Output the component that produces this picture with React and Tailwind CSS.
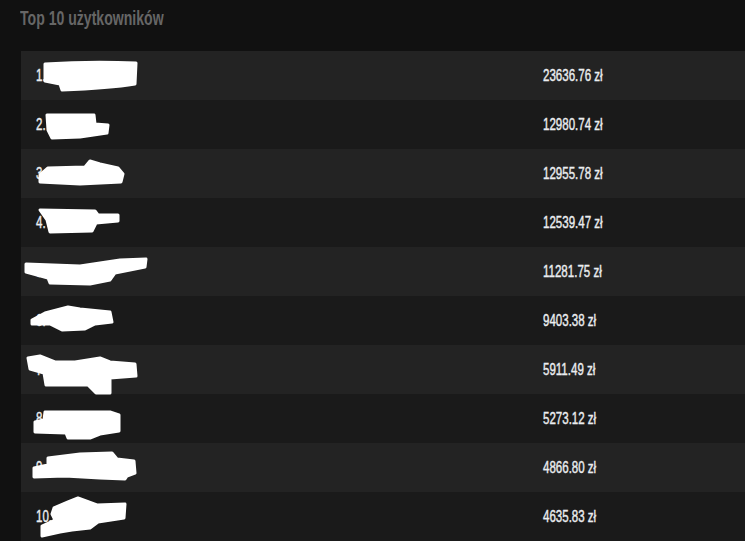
import React from "react";

const rows = [
  { rank: "1.", amount: "23636.76 zł", blob: "M45,13 Q90,10 136,12 L135,33 Q110,37 62,39 L60,33 L45,30 Z" },
  { rank: "2.", amount: "12980.74 zł", blob: "M47,15 L94,15 L95,24 L108,25 L107,33 L80,37 L52,38 L48,30 Z" },
  { rank: "3.", amount: "12955.78 zł", blob: "M40,26 L48,19 L85,18 L90,12 L100,15 L118,19 L123,25 L121,33 L80,35 L40,33 Z" },
  { rank: "4.", amount: "12539.47 zł", blob: "M40,12 L95,13 L98,17 L118,17 L118,23 L96,25 L92,33 L50,34 L47,22 Z" },
  { rank: "5.", amount: "11281.75 zł", blob: "M26,17 L80,19 L120,13 L146,12 L145,20 L115,26 L110,33 L90,37 L50,36 L48,31 L26,25 Z" },
  { rank: "6.", amount: "9403.38 zł", blob: "M32,24 L45,17 L68,11 L80,13 L110,16 L112,26 L95,28 L85,33 L62,34 L50,28 L32,28 Z" },
  { rank: "7.", amount: "5911.49 zł", blob: "M28,13 L40,11 L55,17 L75,17 L100,13 L110,17 L135,19 L136,31 L110,33 L110,48 L96,48 L88,40 L46,40 L44,28 L30,24 Z" },
  { rank: "8.", amount: "5273.12 zł", blob: "M45,18 L110,18 L119,21 L119,37 L100,40 L90,44 L68,44 L66,39 L35,38 L35,28 L44,26 Z" },
  { rank: "9.", amount: "4866.80 zł", blob: "M48,15 L80,11 L112,10 L117,16 L134,18 L135,30 L127,33 L125,36 L100,35 L65,33 L34,34 L34,25 L48,22 Z" },
  { rank: "10.", amount: "4635.83 zł", blob: "M54,16 L68,10 L78,6 L97,13 L125,12 L124,26 L98,30 L90,36 L72,38 L60,40 L42,44 L42,34 L55,28 L52,22 Z" },
];

const font = { fontFamily: '"Liberation Sans", Arial, sans-serif' };

export default function App() {
  return (
    <div className="w-[745px] h-[541px] overflow-hidden bg-[#111111]" style={font}>
      <div className="pl-[20px] pt-[6px] h-[51px]">
        <h2 className="inline-block origin-left scale-x-[0.67] whitespace-nowrap text-[21px] leading-[24px] font-bold text-[#666666]">
          Top 10 użytkowników
        </h2>
      </div>
      <div className="ml-[21px] w-[724px]">
        {rows.map((r, i) => (
          <div
            key={r.rank}
            className={`relative grid grid-cols-[507px_1fr] h-[49px] items-center text-[16px] text-[#ebedf0] ${
              i % 2 === 0 ? "bg-[#232323]" : "bg-[#1a1a1a]"
            }`}
          >
            <div className="pl-[15px]">
              <span className="inline-block origin-left scale-x-[0.72] [-webkit-text-stroke:0.4px_#ebedf0]">{r.rank}</span>
            </div>
            <div className="pl-[15px] whitespace-nowrap">
              <span className="inline-block origin-left scale-x-[0.72] [-webkit-text-stroke:0.4px_#ebedf0]">{r.amount}</span>
            </div>
            <svg className="absolute left-0 top-0 overflow-visible pointer-events-none z-10" width="200" height="49">
              <g transform="translate(-21,0)">
                <path d={r.blob} fill="#ffffff" stroke="#ffffff" strokeWidth="3" strokeLinejoin="round" />
              </g>
            </svg>
          </div>
        ))}
      </div>
    </div>
  );
}
